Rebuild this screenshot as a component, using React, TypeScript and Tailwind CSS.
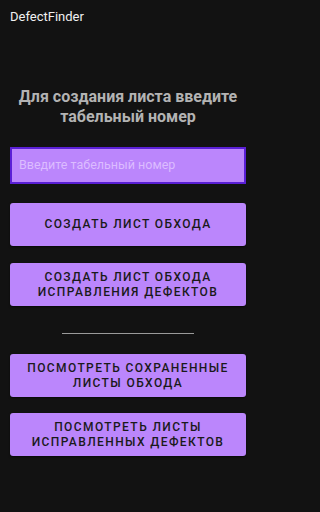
export default function App() {
  const buttons = [
    ['СОЗДАТЬ ЛИСТ ОБХОДА'],
    ['СОЗДАТЬ ЛИСТ ОБХОДА', 'ИСПРАВЛЕНИЯ ДЕФЕКТОВ'],
  ];
  const viewButtons = [
    ['ПОСМОТРЕТЬ СОХРАНЕННЫЕ', 'ЛИСТЫ ОБХОДА'],
    ['ПОСМОТРЕТЬ ЛИСТЫ', 'ИСПРАВЛЕННЫХ ДЕФЕКТОВ'],
  ];

  const renderButton = (lines: string[], i: number, mt: string) => (
    <button
      key={i}
      className={`${mt} flex h-[43px] w-full flex-col items-center justify-center rounded-[3px] bg-[#bb86fc] text-[12px] font-medium leading-[15px] tracking-[1.4px] text-[#1a1a1a] shadow-[0_1px_2px_rgba(0,0,0,0.6)]`}
    >
      {lines.map(l => (
        <span key={l}>{l}</span>
      ))}
    </button>
  );

  return (
    <div className="min-h-screen w-full bg-[#121212] font-['Roboto',sans-serif]">
      <div className="flex w-[256px] flex-col">
        <div className="px-[10px] pt-[9px] text-[13px] leading-[16px] text-[#f0f0f0]">DefectFinder</div>

        <div className="mt-[62px] px-[6px] text-center text-[16px] font-bold leading-[20px] text-[#b3b3b3]">
          Для создания листа введите
          <br />
          табельный номер
        </div>

        <div className="px-[10px]">
          <div className="mt-[20px] flex h-[37px] items-center border-2 border-[#5a1fd6] bg-[#bb86fc] px-[7px] text-[12.5px] text-[#dcbcff]">
            Введите табельный номер
          </div>

          {buttons.map((b, i) => renderButton(b, i, i === 0 ? 'mt-[19px]' : 'mt-[17px]'))}

          <div className="mx-auto mt-[27px] h-px w-[132px] bg-[#9a9a9a]" />

          {viewButtons.map((b, i) => renderButton(b, i + 2, i === 0 ? 'mt-[20px]' : 'mt-[16px]'))}
        </div>
      </div>
    </div>
  );
}
